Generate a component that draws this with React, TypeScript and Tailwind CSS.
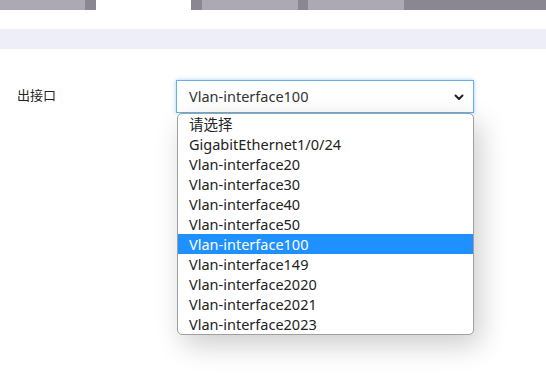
import React from "react";

const OPTIONS = [
  "请选择",
  "GigabitEthernet1/0/24",
  "Vlan-interface20",
  "Vlan-interface30",
  "Vlan-interface40",
  "Vlan-interface50",
  "Vlan-interface100",
  "Vlan-interface149",
  "Vlan-interface2020",
  "Vlan-interface2021",
  "Vlan-interface2023",
];

const SELECTED = "Vlan-interface100";

export default function App() {
  return (
    <div
      className="w-[546px] h-[376px] bg-white overflow-hidden text-[#333]"
      style={{ fontFamily: '"Noto Sans", "Noto Sans CJK SC", sans-serif' }}
    >
      {/* Top tab strip */}
      <div className="flex h-[10px]">
        <div className="w-[85px] bg-[#aca9b4]" />
        <div className="w-[11px] bg-[#8a8793]" />
        <div className="w-[95px] bg-white" />
        <div className="w-[11px] bg-[#8a8793]" />
        <div className="w-[96px] bg-[#aca9b4]" />
        <div className="w-[10px] bg-[#8a8793]" />
        <div className="w-[96px] bg-[#aca9b4]" />
        <div className="flex-1 bg-[#8a8793]" />
      </div>

      {/* Section band */}
      <div className="mt-[19px] h-[20px] bg-[#eeeef8]" />

      {/* Form row */}
      <div className="flex items-center mt-[31px]">
        <div className="w-[176px] pl-[17px] text-[13px] text-[#222] -mt-[2px]">出接口</div>
        <div className="relative w-[298px]">
          <div className="flex items-center justify-between h-[33px] border border-[#66afe9] bg-white pl-[12px] pr-[8px] shadow-[0_0_4px_rgba(102,175,233,0.6)]">
            <span className="text-[14.5px] text-[#333]">{SELECTED}</span>
            <svg width="12" height="12" viewBox="0 0 12 12" fill="none">
              <path d="M2.5 4.5 L6 8 L9.5 4.5" stroke="#222" strokeWidth="2" strokeLinecap="round" strokeLinejoin="round" />
            </svg>
          </div>

          {/* Open dropdown list */}
          <div className="absolute left-[1px] right-0 top-[33px] bg-white border border-[#a0a0a0] rounded-[5px] shadow-[6px_10px_28px_rgba(0,0,0,0.2)] z-10">
            {OPTIONS.map((o) => (
              <div
                key={o}
                className={`h-[20px] leading-[20px] pl-[11px] text-[14.5px] ${
                  o === SELECTED ? "bg-[#1e90ff] text-white" : "text-[#222]"
                }`}
              >
                {o}
              </div>
            ))}
          </div>
        </div>
      </div>
    </div>
  );
}
